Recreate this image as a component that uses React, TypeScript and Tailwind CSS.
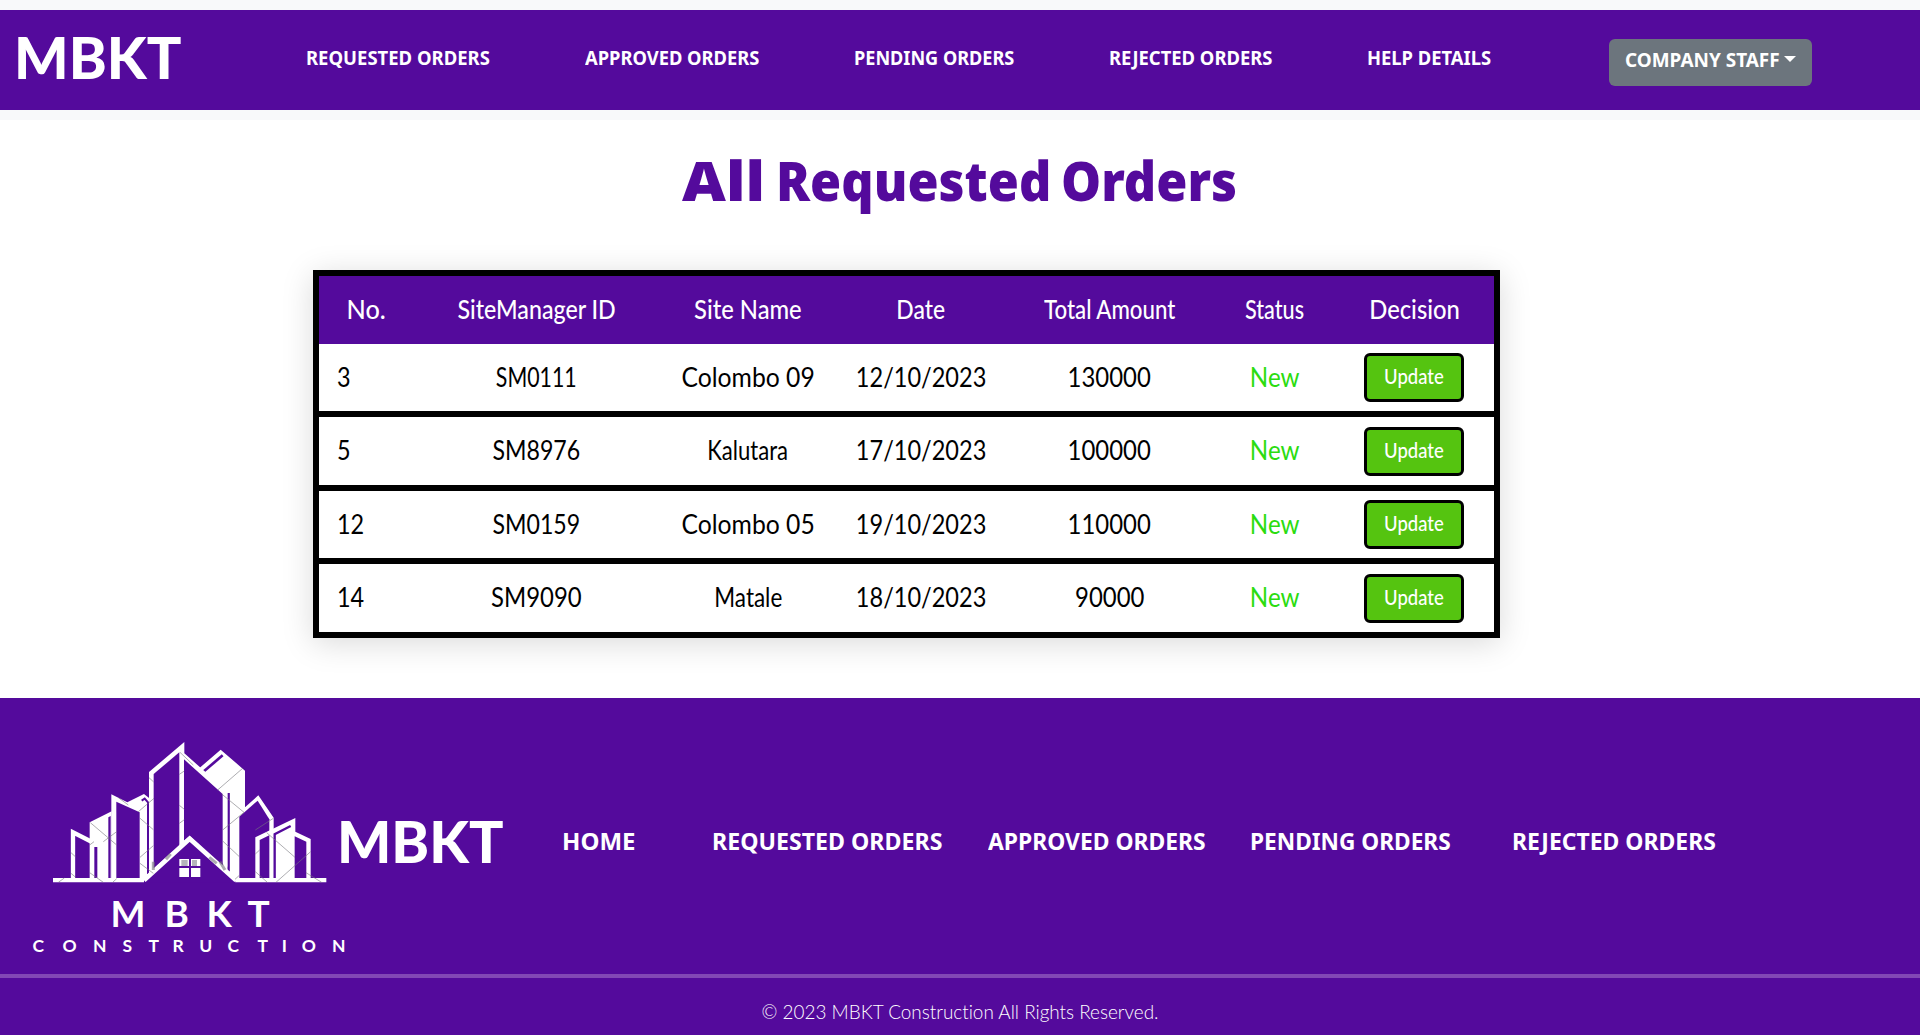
import type { ReactNode } from "react";

const NOTO = "font-['Noto_Sans',sans-serif]";

function Fit({ s, children }: { s: string; children: ReactNode }) {
  return <span className={`inline-block whitespace-nowrap ${s}`}>{children}</span>;
}

const headerLinks = [
  { label: "REQUESTED ORDERS", w: "w-[279px]", s: "origin-left scale-x-[0.924]" },
  { label: "APPROVED ORDERS", w: "w-[269px]", s: "origin-left scale-x-[0.916]" },
  { label: "PENDING ORDERS", w: "w-[255px]", s: "origin-left scale-x-[0.905]" },
  { label: "REJECTED ORDERS", w: "w-[258px]", s: "origin-left scale-x-[0.92]" },
  { label: "HELP DETAILS", w: "w-[242px]", s: "origin-left scale-x-[0.918]" },
];

const footerLinks = [
  { label: "HOME", w: "w-[150px]", s: "origin-left scale-x-[1.045]" },
  { label: "REQUESTED ORDERS", w: "w-[276px]", s: "origin-left scale-x-[1.007]" },
  { label: "APPROVED ORDERS", w: "w-[262px]", s: "origin-left scale-x-[0.994]" },
  { label: "PENDING ORDERS", w: "w-[262px]", s: "origin-left scale-x-[0.985]" },
  { label: "REJECTED ORDERS", w: "w-[210px]", s: "origin-left scale-x-[0.998]" },
];

const columns = [
  { label: "No.", w: "w-[94px]", s: "scale-x-[0.97]" },
  { label: "SiteManager ID", w: "w-[247px]", s: "scale-x-[0.892]" },
  { label: "Site Name", w: "w-[176px]", s: "scale-x-[0.913]" },
  { label: "Date", w: "w-[169px]", s: "scale-x-[0.88]" },
  { label: "Total Amount", w: "w-[209px]", s: "scale-x-[0.856]" },
  { label: "Status", w: "w-[122px]", s: "scale-x-[0.831]" },
  { label: "Decision", w: "w-[157px]", s: "scale-x-[0.915]" },
];

const rows = [
  { no: "3", id: "SM0111", idScale: "scale-x-[0.82]", site: "Colombo 09", siteScale: "scale-x-[0.95]", date: "12/10/2023", total: "130000", h: "h-[73px] border-b-6" },
  { no: "5", id: "SM8976", idScale: "scale-x-[0.89]", site: "Kalutara", siteScale: "scale-x-[0.85]", date: "17/10/2023", total: "100000", h: "h-[74px] border-b-6" },
  { no: "12", id: "SM0159", idScale: "scale-x-[0.89]", site: "Colombo 05", siteScale: "scale-x-[0.95]", date: "19/10/2023", total: "110000", h: "h-[73px] border-b-6" },
  { no: "14", id: "SM9090", idScale: "scale-x-[0.92]", site: "Matale", siteScale: "scale-x-[0.865]", date: "18/10/2023", total: "90000", h: "h-[68px]" },
];

function Logo() {
  const bg = "#540a9c";
  return (
    <svg className="h-[276px] w-[335px] shrink-0 overflow-visible" viewBox="0 0 335 276" fill="#fff">
      <g transform="translate(20 22) scale(0.33333)">
        {/* left towers */}
        <path d="M99 474H372V487H99Z" />
        <path d="M159 478V337L216 366" fill="none" stroke="#fff" strokeWidth="13" />
        <path d="M209 307L275 274V480H209Z" />
        <path d="M223 381H232V474H223ZM265 292L272 288V474H265Z" fill={bg} />
        <path d="M274 223L322 247L372 222L392 238V480H274Z" />
        <path d="M289 245L359 277V474H289Z" fill={bg} />
        <path d="M365 242L374 236L384 247V462" fill="none" stroke={bg} strokeWidth="6" />
        {/* right back tower */}
        <path d="M535 147L602 89L675 152V262L715 226L761 293V480H645L608 447V222Z" />
        <path d="M550 155L608 106" stroke={bg} strokeWidth="8" />
        <path d="M658 290L713 242L748 298V474H658Z" fill={bg} />
        <path d="M626 219V455" stroke={bg} strokeWidth="7" />
        {/* central tower */}
        <path d="M387 156L493 66V100L622 214V440L509 350L372 480H387Z" />
        <path d="M401 162L478 97V378L401 446Z" fill={bg} />
        <path d="M492 118L608 222V436L509 348L492 362Z" fill={bg} />
        {/* right towers */}
        <path d="M706 352L826 294V335L872 357V480H706Z" />
        <path d="M719 360L748 346V474H719ZM824 349L859 365V474H824Z" fill={bg} />
        <path d="M764 474V343L812 318" fill="none" stroke={bg} strokeWidth="7" />
        <path d="M645 474H919V487H645Z" />
        {/* house */}
        <path d="M372 487L509 364L648 487Z" fill={bg} />
        <path d="M372 481L509 356L648 481" fill="none" stroke="#fff" strokeWidth="14" />
        <path d="M478 417H541V471H478Z" />
        <path d="M484 420H503V440H484ZM516 420H531V440H516Z" fill="#8d8d96" opacity=".65" />
        <path d="M510 415V473M476 441H543" stroke={bg} strokeWidth="6" />
        <g stroke="#77777d" strokeWidth="3" opacity=".6" fill="none">
          <path d="M211 308L290 375M250 365L290 335M209 375L222 365M153 398L166 410M153 460L166 471M115 487L133 474M209 458L250 487M278 487L290 476M295 233L325 255" />
          <path d="M355 275L402 235M359 294L400 329M360 412L400 377M360 430L400 460M387 173L401 186M478 163L493 153M478 256L493 268M478 310L493 299M480 97L520 135" />
          <path d="M593 210L668 145M605 222L672 277M608 330L672 277M608 363L658 410M645 478L658 466M706 330L760 295M740 338L825 412M768 487L872 395M706 455L742 487M706 402L719 390M858 458L905 487" />
          <path d="M400 425V450M438 418L452 402M568 412L590 430M600 425L615 450" strokeWidth="9" />
        </g>
      </g>
      <g className="font-['Lato',sans-serif] font-bold">
        <text x="110.500 164.500 206.500 247.500" y="228.500" fontSize="37">MBKT</text>
        <text x="32.500 62.500 93 122.500 148.500 172.500 199.200 227.500 257.500 281.800 301.800 332" y="253.500" fontSize="17.500">CONSTRUCTION</text>
      </g>
    </svg>
  );
}

export default function App() {
  return (
    <div className="flex h-[1035px] w-[1920px] flex-col overflow-hidden bg-white font-['Lato',sans-serif]">
      <header className="h-[120px] shrink-0 bg-[#f8f9fa] py-[10px]">
        <div className="flex h-[100px] items-start bg-[#540a9c] text-white">
          <div className="w-[305px] pt-[17px] pl-[14px] text-[58px] leading-[60px] font-black">
            <Fit s="origin-left scale-x-[0.99]">MBKT</Fit>
          </div>
          <nav className={`flex pt-[33px] text-[20px] leading-[30px] font-bold ${NOTO}`}>
            {headerLinks.map((l) => (
              <a key={l.label} className={`pl-px ${l.w}`}>
                <Fit s={l.s}>{l.label}</Fit>
              </a>
            ))}
          </nav>
          <button className={`mt-[29px] ml-px flex h-[47px] w-[203px] items-start rounded-md bg-[#6c757d] pt-[6px] pl-[16px] text-[20px] leading-[30px] font-bold ${NOTO}`}>
            <span className="w-[159px] text-left">
              <Fit s="origin-left scale-x-[0.947]">COMPANY STAFF</Fit>
            </span>
            <span className="mt-[11px] border-x-6 border-t-6 border-x-transparent border-t-white" />
          </button>
        </div>
      </header>

      <main className="flex h-[578px] shrink-0 flex-col">
        <h1 className={`flex pt-[30px] pl-[682px] text-[55px] leading-[60px] font-black text-[#540a9c] ${NOTO}`}>
          <span className="w-[94px]"><Fit s="origin-left scale-x-[1.1]">All</Fit></span>{" "}
          <span className="w-[285px]"><Fit s="origin-left scale-x-[0.916]">Requested</Fit></span>{" "}
          <span><Fit s="origin-left scale-x-[0.917]">Orders</Fit></span>
        </h1>
        <div className="mt-[60px] ml-[313px] w-[1187px] border-6 border-black text-[26px] leading-[36px] text-black shadow-[0_5px_30px_rgba(0,0,0,0.15)]">
          <div className="flex h-[68px] items-center bg-[#540a9c] pb-[2px] font-medium text-white">
            {columns.map((c) => (
              <div key={c.label} className={`flex justify-center ${c.w}`}>
                <Fit s={c.s}>{c.label}</Fit>
              </div>
            ))}
          </div>
          {rows.map((r) => (
            <div key={r.no} className={`flex items-center border-black bg-white *:flex *:justify-center ${r.h}`}>
              <div className="w-[93px] pb-[2px] pl-[18px]">
                <span className="w-full origin-left scale-x-[0.9]">{r.no}</span>
              </div>
              <div className="w-[248px] pb-[2px]"><Fit s={r.idScale}>{r.id}</Fit></div>
              <div className="w-[176px] pb-[2px]"><Fit s={r.siteScale}>{r.site}</Fit></div>
              <div className="w-[169px] pb-[2px] pl-px"><Fit s="scale-x-[0.905]">{r.date}</Fit></div>
              <div className="w-[209px] pb-[2px]"><Fit s="scale-x-[0.92]">{r.total}</Fit></div>
              <div className="w-[122px] pb-[2px] text-[#2bdc10]"><Fit s="scale-x-[0.93]">New</Fit></div>
              <div className="w-[156px]">
                <button className="h-[49px] w-[100px] rounded-md border-3 border-black bg-[#55c410] pb-[3px] text-[21px] leading-[36px] font-medium text-white">
                  <Fit s="scale-x-[0.88]">Update</Fit>
                </button>
              </div>
            </div>
          ))}
        </div>
      </main>

      <footer className="flex-1 bg-[#540a9c] text-white">
        <div className="flex h-[276px]">
          <Logo />
          <div className="w-[227px] pt-[113px] pl-[2px] text-[58px] leading-[60px] font-black">
            <Fit s="origin-left scale-x-[0.985]">MBKT</Fit>
          </div>
          <nav className={`flex pt-[128px] text-[23px] leading-[30px] font-bold ${NOTO}`}>
            {footerLinks.map((l) => (
              <a key={l.label} className={l.w}>
                <Fit s={l.s}>{l.label}</Fit>
              </a>
            ))}
          </nav>
        </div>
        <div className="h-[4px] bg-[#8247b5]" />
        <p className="pt-[18px] text-center text-[20px] leading-[30px] font-light [font-variant-ligatures:none]">
          <Fit s="scale-x-[0.945]">© 2023 MBKT Construction All Rights Reserved.</Fit>
        </p>
      </footer>
    </div>
  );
}
